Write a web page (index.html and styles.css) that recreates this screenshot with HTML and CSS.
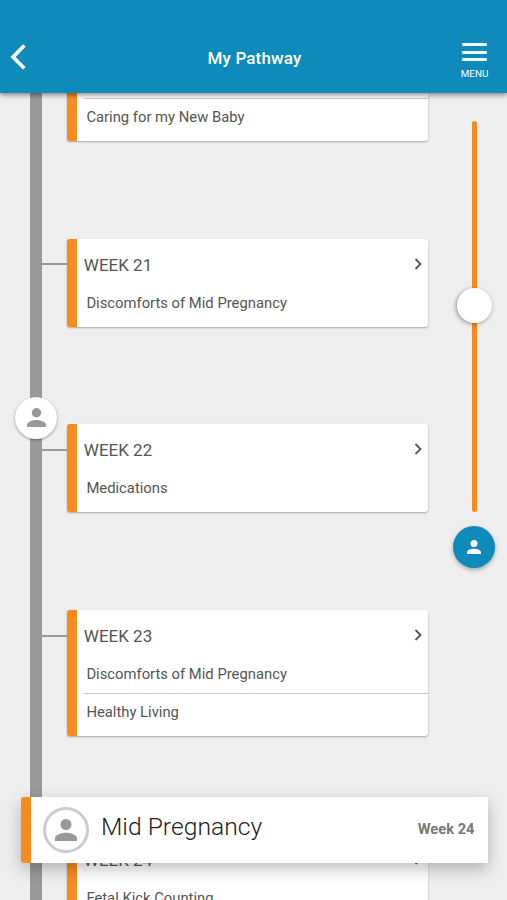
FILE: index.html
```html
<!DOCTYPE html>
<html lang="en">
<head>
<meta charset="utf-8">
<title>My Pathway</title>
<link rel="stylesheet" href="styles.css">
</head>
<body>
<svg class="defs" width="0" height="0">
  <symbol id="person" viewBox="0 0 16 16"><circle cx="8" cy="4" r="4"/><path d="M0 16v-2c0-2.700 5.300-4 8-4s8 1.300 8 4v2z"/></symbol>
  <symbol id="chevron" viewBox="0 0 8 12"><path d="M1.500 1l5 5-5 5" fill="none" stroke="#555" stroke-width="1.800"/></symbol>
</svg>
<div class="app">
  <header class="header">
    <svg class="back" viewBox="0 0 16 26"><path d="M14.300 1.500L3 13l11.300 11.200" fill="none" stroke="#fff" stroke-width="3.700"/></svg>
    <h1 class="header-title">My Pathway</h1>
    <div class="menu">
      <span class="menu-bars"><i></i><i></i><i></i></span>
      <span class="menu-label">MENU</span>
    </div>
  </header>
  <main class="pathway">
    <div class="rail"></div>
    <div class="weeks">
      <section class="card card-continued">
        <p class="topic">Caring for my New Baby</p>
      </section>
      <section class="card">
        <h2 class="week">WEEK 21<svg class="chevron"><use href="#chevron"/></svg></h2>
        <p class="topic">Discomforts of Mid Pregnancy</p>
      </section>
      <section class="card">
        <h2 class="week">WEEK 22<svg class="chevron"><use href="#chevron"/></svg></h2>
        <p class="topic">Medications</p>
      </section>
      <section class="card">
        <h2 class="week">WEEK 23<svg class="chevron"><use href="#chevron"/></svg></h2>
        <p class="topic">Discomforts of Mid Pregnancy</p>
        <p class="topic">Healthy Living</p>
      </section>
      <section class="card">
        <h2 class="week">WEEK 24<svg class="chevron"><use href="#chevron"/></svg></h2>
        <p class="topic">Fetal Kick Counting</p>
      </section>
    </div>
    <aside class="scrubber">
      <div class="track"><span class="thumb"></span></div>
      <div class="locate"><svg><use href="#person"/></svg></div>
    </aside>
    <div class="marker"><svg><use href="#person"/></svg></div>
  </main>
  <footer class="stage">
    <div class="avatar"><svg><use href="#person"/></svg></div>
    <span class="stage-name">Mid Pregnancy</span>
    <span class="stage-week">Week 24</span>
  </footer>
</div>
</body>
</html>
```
FILE: styles.css
```css
* { box-sizing: border-box; }
body { margin: 0; font-family: Roboto, "Liberation Sans", sans-serif; background: #eee; }
h1, h2, p { margin: 0; font-weight: 400; }
svg { display: block; }
.defs { position: absolute; }
.app { position: relative; height: 900px; overflow: hidden; display: flex; flex-direction: column; }

.header {
  position: relative; z-index: 2; flex: none; height: 92.500px; padding: 25px 18px 0 10px;
  display: grid; grid-template-columns: 39px 1fr 29px; align-items: center;
  background: #0e8bba; color: #fff; box-shadow: 0 2px 5px rgba(0, 0, 0, .45);
}
.back { width: 16px; height: 26px; margin-top: -4px; }
.header-title { text-align: center; font-size: 17px; line-height: 20px; font-weight: 500; letter-spacing: .15px; margin-top: -1px; }
.menu { display: flex; flex-direction: column; align-items: center; gap: 8px; margin-top: 5px; }
.menu-bars { display: flex; flex-direction: column; gap: 4.800px; }
.menu-bars i { width: 25px; height: 2.700px; border-radius: 1px; background: #f0f9fc; }
.menu-label { font-size: 9.800px; line-height: 10px; }

.pathway { position: relative; flex: 1; min-height: 0; display: flex; overflow: hidden; }
.rail { width: 12px; margin-left: 30.300px; background: #999; flex: none; }
.weeks { width: 385.300px; flex: none; display: flex; flex-direction: column; gap: 97.700px; }
.card {
  position: relative; flex: none; margin-left: 24.500px; padding: 7px 0 5px 7px;
  border-left: 10px solid #f78c1e; border-radius: 3px;
  background: #fff; box-shadow: 0 1px 2px rgba(0, 0, 0, .3); color: #555;
}
.card::before { content: ""; position: absolute; top: 24.500px; left: -34.500px; width: 24.500px; height: 2.300px; background: #999; }
.card-continued { padding-top: 5.500px; border-top-left-radius: 0; border-top-right-radius: 0; }
.card-continued::before { display: none; }
.week { height: 38px; line-height: 39px; font-size: 17px; display: flex; justify-content: space-between; }
.chevron { width: 8px; height: 12px; margin: 12px 5.500px 0 0; }
.topic { height: 38px; line-height: 38px; padding-left: 2.600px; font-size: 14.800px; }
.topic + .topic, .card-continued .topic { border-top: 1px solid #ccc; line-height: 37px; }

.scrubber { flex: 1; display: flex; flex-direction: column; align-items: center; padding: 28px 0 0 15px; }
.track { display: flex; justify-content: center; width: 5px; height: 391px; border-radius: 3px; background: #f78c1e; }
.thumb { flex: none; width: 35px; height: 35px; margin-top: 167.500px; border-radius: 50%; background: #fff; box-shadow: -1px 1px 4px rgba(0, 0, 0, .4); }
.locate, .marker { display: flex; align-items: center; justify-content: center; width: 42px; height: 42px; border-radius: 50%; }
.locate { margin-top: 14.500px; margin-left: -1px; background: #0e8bba; fill: #fff; box-shadow: 0 2px 4px rgba(0, 0, 0, .3); }
.locate svg { width: 14px; height: 14px; margin-top: -1px; }
.marker { position: absolute; left: 15.300px; top: 304px; background: #fff; fill: #999; box-shadow: 0 1px 3px rgba(0, 0, 0, .35); }
.marker svg { width: 19px; height: 19px; }

.stage {
  position: absolute; z-index: 3; left: 20.500px; top: 796.500px; width: 467px; height: 66.800px;
  display: flex; align-items: center; padding: 0 13px 0 12px;
  border-left: 10px solid #f78c1e; border-radius: 3px 1px 1px 3px; background: #fff;
  box-shadow: 0 6px 16px rgba(0, 0, 0, .25);
}
.avatar { flex: none; width: 46px; height: 46px; display: flex; align-items: center; justify-content: center; border: 3px solid #ccc; border-radius: 50%; fill: #999; }
.avatar svg { width: 22px; height: 22px; }
.stage-name { margin: -7px auto 0 12.500px; font-size: 24.700px; font-weight: 300; color: #222; white-space: nowrap; }
.stage-week { margin-top: -2px; font-size: 14.700px; font-weight: 700; color: #777; white-space: nowrap; }
```
